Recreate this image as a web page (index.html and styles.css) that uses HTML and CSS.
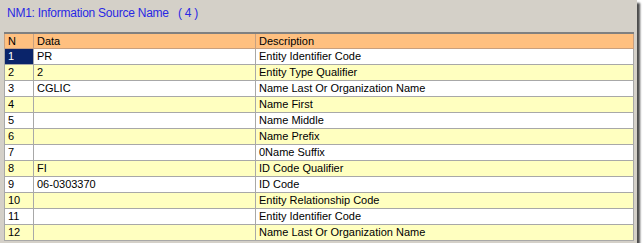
FILE: index.html
```html
<!DOCTYPE html>
<html>
<head>
<meta charset="utf-8">
<link rel="stylesheet" href="styles.css">
</head>
<body>
<div class="window">
  <div class="title">NM1: Information Source Name   ( 4 )</div>
  <table class="grid">
    <colgroup><col class="c-n"><col class="c-data"><col class="c-desc"></colgroup>
    <thead>
      <tr><th>N</th><th>Data</th><th>Description</th></tr>
    </thead>
    <tbody>
      <tr class="w"><td class="sel">1</td><td>PR</td><td>Entity Identifier Code</td></tr>
      <tr class="y"><td>2</td><td>2</td><td>Entity Type Qualifier</td></tr>
      <tr class="w"><td>3</td><td>CGLIC</td><td>Name Last Or Organization Name</td></tr>
      <tr class="y"><td>4</td><td></td><td>Name First</td></tr>
      <tr class="w"><td>5</td><td></td><td>Name Middle</td></tr>
      <tr class="y"><td>6</td><td></td><td>Name Prefix</td></tr>
      <tr class="w"><td>7</td><td></td><td>0Name Suffix</td></tr>
      <tr class="y"><td>8</td><td>FI</td><td>ID Code Qualifier</td></tr>
      <tr class="w"><td>9</td><td>06-0303370</td><td>ID Code</td></tr>
      <tr class="y"><td>10</td><td></td><td>Entity Relationship Code</td></tr>
      <tr class="w"><td>11</td><td></td><td>Entity Identifier Code</td></tr>
      <tr class="y"><td>12</td><td></td><td>Name Last Or Organization Name</td></tr>
    </tbody>
  </table>
</div>
</body>
</html>
```
FILE: styles.css
```css
html, body {
  margin: 0;
  padding: 0;
  background: #ffffff;
}
.window {
  width: 637px;
  height: 243px;
  background: #d4d0c8;
  box-shadow: 3px 3px 2px rgba(0,0,0,0.7);
  display: flex;
  flex-direction: column;
  overflow: hidden;
}
.title {
  font-family: "Liberation Sans", Arial, sans-serif;
  font-size: 12px;
  letter-spacing: -0.25px;
  line-height: 16px;
  color: #2828e4;
  padding: 5px 0 0 7px;
  height: 32px;
  box-sizing: border-box;
  white-space: pre;
  flex: none;
}
.grid {
  margin-left: 4px;
  width: 630px;
  border-collapse: collapse;
  table-layout: fixed;
  font-family: "Liberation Sans", Arial, sans-serif;
  font-size: 11px;
  color: #000;
  border-top: 2px solid #808080;
  border-left: 1px solid #808080;
}
.c-n { width: 29px; }
.c-data { width: 222px; }
.grid th, .grid td {
  text-align: left;
  font-weight: normal;
  padding: 0 0 0 3px;
  border: 1px solid #a8a8a8;
  white-space: nowrap;
  overflow: hidden;
}
.grid th {
  background: #ffc080;
  height: 14px;
  line-height: 14px;
  border-color: #c8a080;
}
.grid td {
  height: 15px;
  line-height: 15px;
}
.grid tr.w td { background: #ffffff; }
.grid tr.y td { background: #ffffc0; }
.grid td.sel {
  background: #0a246a !important;
  color: #ffffff;
}
```
